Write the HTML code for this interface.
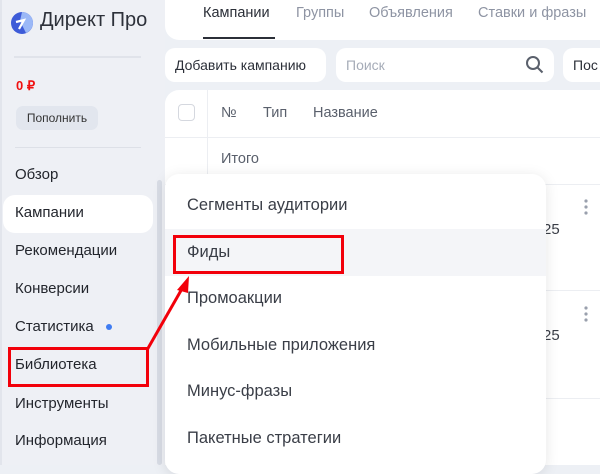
<!DOCTYPE html>
<html><head><meta charset="utf-8"><style>
*{margin:0;padding:0;box-sizing:border-box}
body{width:600px;height:465px;overflow:hidden;background:#edf0f5;font-family:"Liberation Sans","Noto Sans CJK SC",sans-serif;color:#2b2f38;position:relative}
.a{position:absolute;white-space:nowrap}
.side{font-size:15px;color:#23262d}
.menu{font-size:16.5px;color:#3a3e47}
.tab{font-size:14.5px;color:#8e94a3;top:5px}
</style></head><body>
<div class="a" style="left:0;top:0;width:165px;height:465px;background:#eef0f5"></div>
<div class="a" style="left:0;top:0;width:2px;height:465px;background:#e2e5ec"></div>
<svg class="a" style="left:11px;top:12px" width="22" height="22" viewBox="0 0 22 22"><circle cx="11" cy="11" r="11" fill="#3d5bd8"/><path d="M11 0a11 11 0 0 1 11 11a11 11 0 0 1-7 10L9 9z" fill="#9bb8f7"/><path d="M5 10l8-2l-5 9" fill="none" stroke="#fff" stroke-width="2.2"/></svg>
<div class="a" style="left:40px;top:9px;font-size:20px;color:#2d313a">Директ Про</div>
<div class="a" style="left:14px;top:56px;width:127px;height:2px;background:#e0e3ea"></div>
<div class="a" style="left:16px;top:78px;font-size:13px;font-weight:bold;color:#f01010">0 ₽</div>
<div class="a" style="left:16px;top:106px;width:82px;height:24px;background:#e2e6ee;border-radius:7px;font-size:12px;line-height:24px;text-align:center;color:#333">Пополнить</div>
<div class="a" style="left:15px;top:147px;width:126px;height:1px;background:#dde0e7"></div>
<div class="a" style="left:157px;top:180px;width:5px;height:285px;background:#d8dce5;border-radius:3px"></div>
<div class="a" style="left:3px;top:195px;width:150px;height:38px;background:#fff;border-radius:12px"></div>
<div class="a side" style="left:15px;top:166px">Обзор</div>
<div class="a side" style="left:15px;top:204px">Кампании</div>
<div class="a side" style="left:15px;top:242px">Рекомендации</div>
<div class="a side" style="left:15px;top:280px">Конверсии</div>
<div class="a side" style="left:15px;top:318px">Статистика</div>
<div class="a" style="left:106px;top:324px;width:6px;height:6px;border-radius:50%;background:#3f7cf2"></div>
<div class="a side" style="left:15px;top:356px">Библиотека</div>
<div class="a side" style="left:15px;top:395px">Инструменты</div>
<div class="a side" style="left:15px;top:432px">Информация</div>

<div class="a" style="left:165px;top:0;width:435px;height:40px;background:#fff;border-radius:0 0 0 14px"></div>
<div class="a" style="left:203px;top:5px;font-size:14.5px;color:#2b2f38">Кампании</div>
<div class="a" style="left:203px;top:37px;width:72px;height:2px;background:#2b2f38"></div>
<div class="a tab" style="left:296px">Группы</div>
<div class="a tab" style="left:369px">Объявления</div>
<div class="a tab" style="left:478px">Ставки и фразы</div>
<div class="a" style="left:165px;top:48px;width:161px;height:34px;background:#fff;border-radius:10px;font-size:14px;line-height:34px;padding-left:10px;color:#2b2f38">Добавить кампанию</div>
<div class="a" style="left:336px;top:48px;width:218px;height:34px;background:#fff;border-radius:10px;font-size:14px;line-height:34px;padding-left:10px;color:#a6acb8">Поиск</div>
<svg class="a" style="left:525px;top:55px" width="20" height="20" viewBox="0 0 20 20"><circle cx="8" cy="8" r="6" fill="none" stroke="#5a606c" stroke-width="2"/><path d="M12.5 12.5l5 5" stroke="#5a606c" stroke-width="2"/></svg>
<div class="a" style="left:563px;top:48px;width:60px;height:34px;background:#fff;border-radius:10px;font-size:14px;line-height:34px;padding-left:10px">Пос</div>
<div class="a" style="left:165px;top:90px;width:435px;height:375px;background:#fff;border-radius:14px 0 0 0"></div>
<div class="a" style="left:207px;top:90px;width:1px;height:90px;background:#eceef2"></div>
<div class="a" style="left:178px;top:104px;width:17px;height:17px;border:1px solid #d5d8df;border-radius:4px"></div>
<div class="a" style="left:221px;top:105px;font-size:14.5px;color:#5a606c">№</div>
<div class="a" style="left:263px;top:105px;font-size:14.5px;color:#5a606c">Тип</div>
<div class="a" style="left:313px;top:105px;font-size:14.5px;color:#5a606c">Название</div>
<div class="a" style="left:165px;top:137px;width:435px;height:1px;background:#eceef2"></div>
<div class="a" style="left:221px;top:151px;font-size:14.5px;color:#5a606c">Итого</div>
<div class="a" style="left:165px;top:184px;width:435px;height:1px;background:#eceef2"></div>
<div class="a" style="left:165px;top:290px;width:435px;height:1px;background:#eceef2"></div>
<div class="a" style="left:165px;top:398px;width:435px;height:1px;background:#eceef2"></div>
<div class="a" style="left:543px;top:221px;font-size:15px;color:#3a3e47">25</div>
<div class="a" style="left:543px;top:327px;font-size:15px;color:#3a3e47">25</div>
<svg class="a" style="left:583px;top:198px" width="6" height="20"><circle cx="3" cy="3" r="1.6" fill="#9aa0ad"/><circle cx="3" cy="9" r="1.6" fill="#9aa0ad"/><circle cx="3" cy="15" r="1.6" fill="#9aa0ad"/></svg>
<svg class="a" style="left:583px;top:305px" width="6" height="20"><circle cx="3" cy="3" r="1.6" fill="#9aa0ad"/><circle cx="3" cy="9" r="1.6" fill="#9aa0ad"/><circle cx="3" cy="15" r="1.6" fill="#9aa0ad"/></svg>

<div class="a" style="left:165px;top:174px;width:381px;height:300px;background:#fff;border-radius:14px;box-shadow:0 2px 14px rgba(0,0,0,0.1)"></div>
<div class="a" style="left:165px;top:229px;width:381px;height:47px;background:#f4f5f8"></div>
<div class="a menu" style="left:187px;top:196px">Сегменты аудитории</div>
<div class="a menu" style="left:187px;top:243px">Фиды</div>
<div class="a menu" style="left:187px;top:289px">Промоакции</div>
<div class="a menu" style="left:187px;top:336px">Мобильные приложения</div>
<div class="a menu" style="left:187px;top:382px">Минус-фразы</div>
<div class="a menu" style="left:187px;top:429px">Пакетные стратегии</div>

<div class="a" style="left:173px;top:235px;width:171px;height:39px;border:3px solid #f2000a"></div>
<div class="a" style="left:8px;top:347px;width:141px;height:40px;border:3px solid #f2000a"></div>
<svg class="a" style="left:0;top:0" width="600" height="465"><path d="M147 350L183 287" stroke="#f2000a" stroke-width="3"/><path d="M189 276L177 290L188 293z" fill="#f2000a"/></svg>
</body></html>
